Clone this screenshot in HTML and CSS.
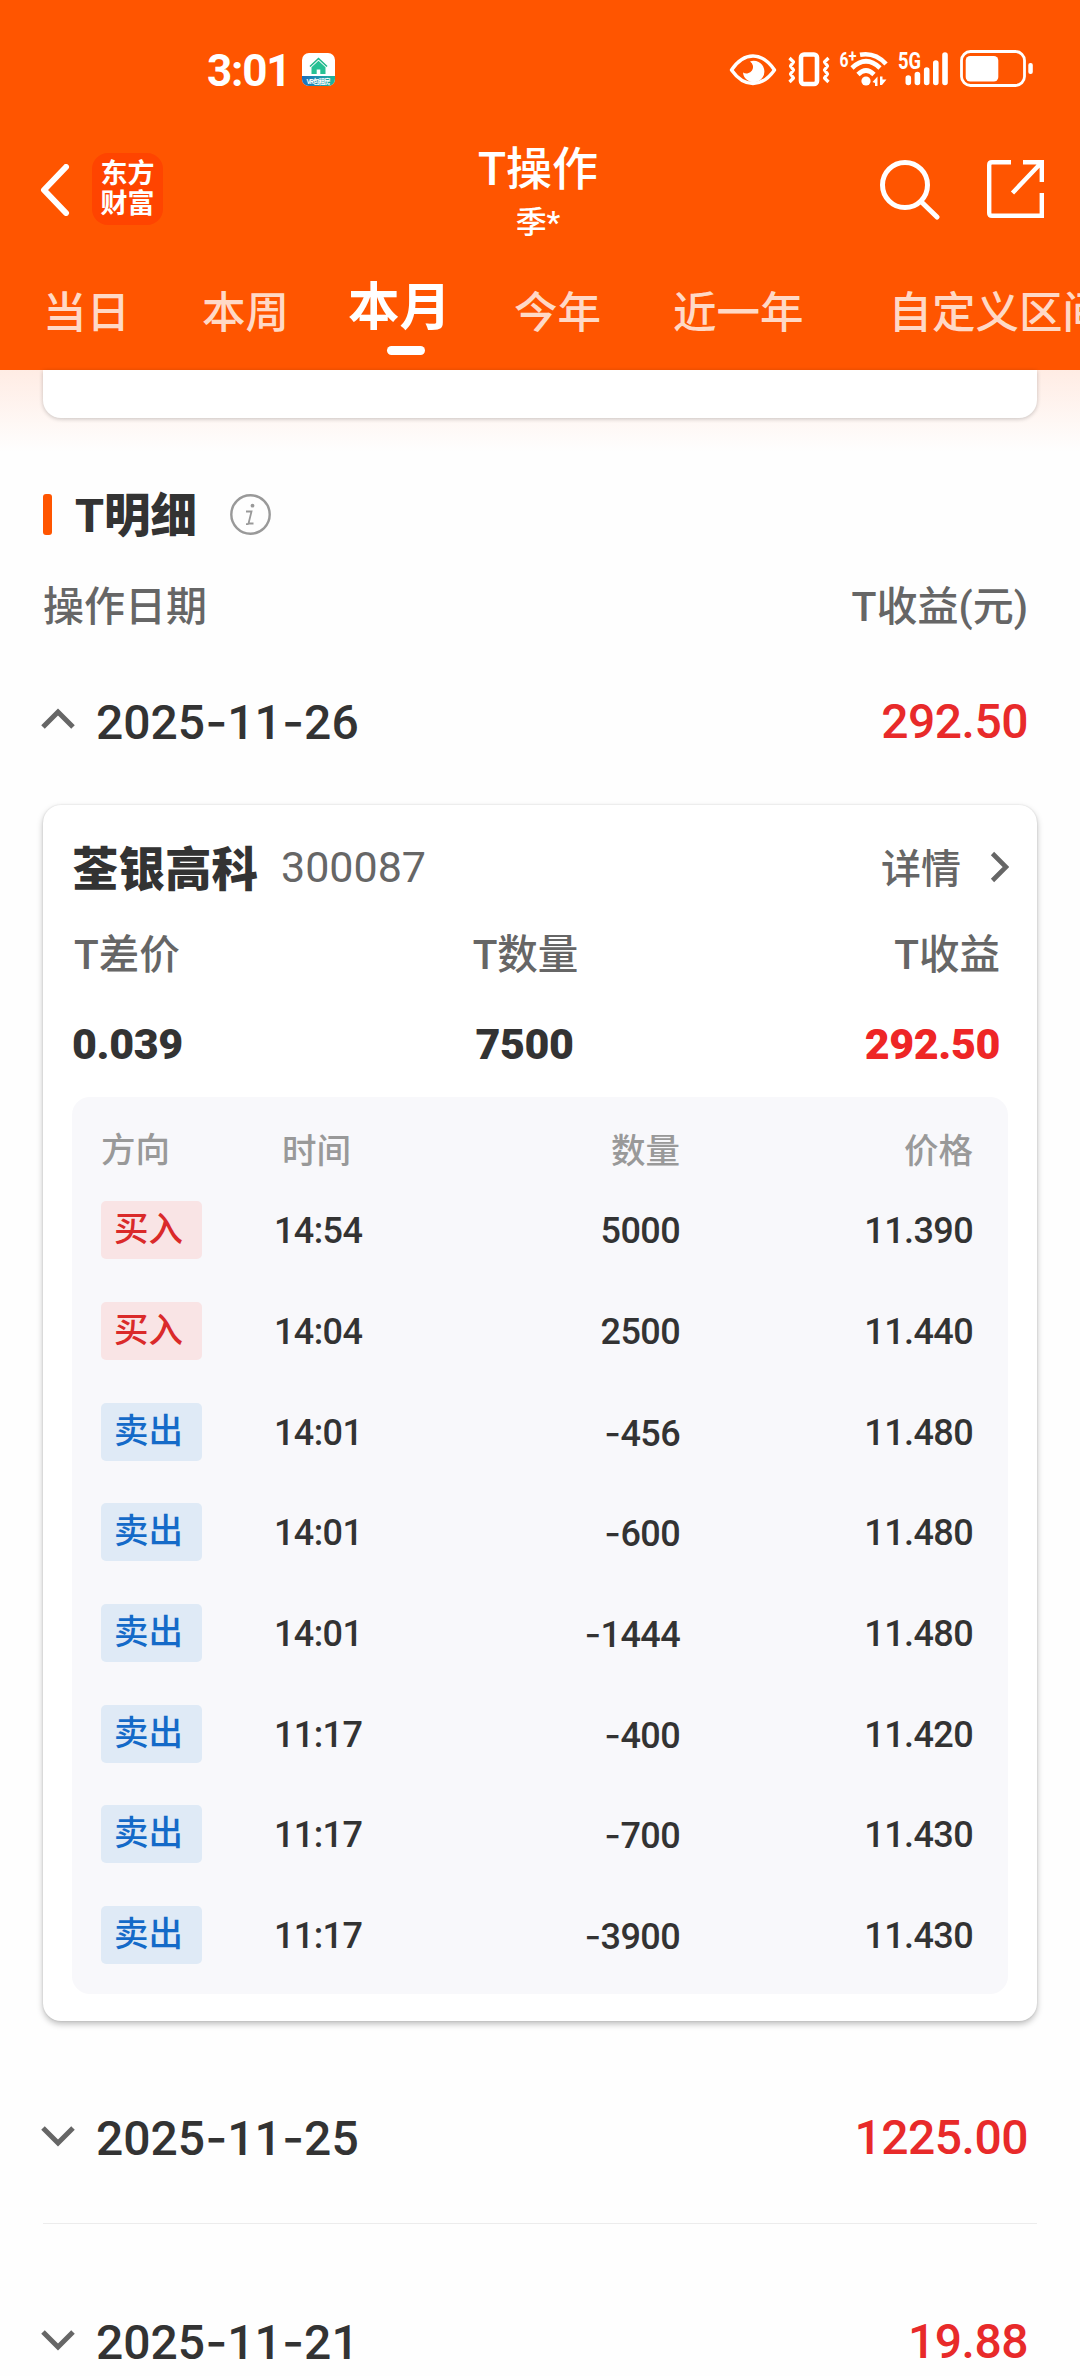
FILE: index.html
```html
<!DOCTYPE html>
<html lang="zh-CN">
<head>
<meta charset="utf-8">
<meta name="viewport" content="width=device-width, initial-scale=1">
<title>T操作</title>
<link rel="stylesheet" href="styles.css">
</head>
<body>
<div class="page">
  <header class="header">
    <div class="status">
      <div class="status-left">
        <span class="clock">3:01</span>
        <svg class="app-badge" viewBox="0 0 33 33">
          <defs>
            <clipPath id="badge"><rect width="33" height="33" rx="7"/></clipPath>
            <linearGradient id="strip"><stop offset="0" stop-color="#1d6fc0"/><stop offset="1" stop-color="#1fb79a"/></linearGradient>
          </defs>
          <g clip-path="url(#badge)">
            <rect width="33" height="33" fill="#fff"/>
            <rect y="23" width="33" height="10" fill="url(#strip)"/>
          </g>
          <path d="M8 13.5 16.5 5.5 25 13.5" fill="none" stroke="#22b88c" stroke-width="1.6"/>
          <path d="M9.5 14.2 16.5 7.8 23.5 14.2V21H18.300V16.500H14.700V21H9.500Z" fill="#27c194"/>
          <text x="16.500" y="31" text-anchor="middle" font-size="6.500" font-weight="700" fill="#fff" textLength="24">VR包租房</text>
        </svg>
      </div>
      <svg class="status-icons" viewBox="726 48 310 42" fill="none" stroke="#fff">
        <path d="M731.500 70Q741 56 753 56T774.500 70Q765 83.500 753 83.500T731.500 70Z" stroke-width="3.400" stroke-linejoin="round"/>
        <path d="M750 61.500A10.700 10.700 0 1 1 743 72.500 6.500 6.500 0 1 0 750 61.500Z" fill="#fff" stroke="none"/>
        <rect x="801" y="54.500" width="16" height="29.500" rx="3" stroke-width="4.600"/>
        <path d="M789.500 58l4 4-3 4 3 4-3 4 3 4-4 4M828.500 58l-4 4 3 4-3 4 3 4-3 4 4 4" stroke-width="3.200" stroke-linejoin="round"/>
        <g stroke-width="4.600">
          <path d="M860 54.800Q875 52 886 64"/>
          <path d="M852 68Q866 54.500 880 68"/>
          <path d="M858 74.500Q866 66.500 874 74.500"/>
        </g>
        <circle cx="866" cy="81" r="4.600" fill="#fff" stroke="none"/>
        <path d="M872.500 82l5-5.500v9.500h-2.500v-3ZM880 76.500h2.500v3h4l-4.500 5.500h-2Z" fill="#fff" stroke="none"/>
        <g fill="#fff" stroke="none" class="net">
          <text x="839.500" y="66.500" font-size="21" textLength="9" lengthAdjust="spacingAndGlyphs">6</text>
          <text x="848.500" y="62" font-size="16" textLength="8" lengthAdjust="spacingAndGlyphs">+</text>
          <text x="898" y="68.500" font-size="23" textLength="23" lengthAdjust="spacingAndGlyphs">5G</text>
        </g>
        <path d="M908.300 78v4.500M917.400 74.500v8M926.700 70v12.500M935.800 63v19.500M945 55v27.500" stroke-width="5.600" stroke-linecap="round"/>
        <rect x="961.500" y="51.500" width="63" height="34" rx="9" stroke-width="2.800"/>
        <rect x="965.700" y="56" width="32.600" height="25.500" rx="4.500" fill="#fff" stroke="none"/>
        <rect x="1028.300" y="63" width="4.500" height="11" rx="2" fill="#fff" stroke="none"/>
      </svg>
    </div>

    <div class="navbar">
      <div class="nav-left">
        <svg class="back" viewBox="0 0 30 52"><path d="M26 3 4 26 26 49" fill="none" stroke="#fff" stroke-width="6" stroke-linecap="round" stroke-linejoin="round"/></svg>
        <div class="brand"><span>东方</span><span>财富</span></div>
      </div>
      <div class="nav-title">
        <h1>T操作</h1>
        <p>季*</p>
      </div>
      <div class="nav-right">
        <svg class="search" viewBox="0 0 60 60" fill="none" stroke="#fff" stroke-width="5" stroke-linecap="round"><circle cx="25" cy="25" r="22.500"/><path d="M41.500 42 57 57"/></svg>
        <svg class="share" viewBox="0 0 57 58" fill="none" stroke="#fff" stroke-width="4.400"><path d="M24 2.200H5Q2.200 2.200 2.200 5V53Q2.200 55.800 5 55.800H54.800V33M36 2.200H54.800V22M54 3 25.500 33" /></svg>
      </div>
    </div>

    <nav class="tabs">
      <span class="tab">当日</span>
      <span class="tab">本周</span>
      <span class="tab active">本月</span>
      <span class="tab">今年</span>
      <span class="tab">近一年</span>
      <span class="tab">自定义区间</span>
    </nav>
  </header>

  <main class="content">
    <div class="summary-tail"></div>

    <div class="section-head">
      <i class="accent"></i>
      <h2>T明细</h2>
      <svg class="info" viewBox="0 0 41 41"><circle cx="20.500" cy="20.500" r="19.200" fill="none" stroke="#999" stroke-width="2.400"/><circle cx="22.500" cy="11.700" r="1.900" fill="#999"/><path d="M16 17.500H21.500L18.500 29.500H23.500M16 30.200H18.500" fill="none" stroke="#999" stroke-width="1.800"/></svg>
    </div>

    <div class="columns"><span>操作日期</span><span>T收益(元)</span></div>

    <div class="day">
      <svg class="caret" viewBox="0 0 34 21"><path d="M2 19 17 4 32 19" fill="none" stroke="#666" stroke-width="5"/></svg>
      <span class="date">2025<b>-</b>11<b>-</b>26</span>
      <span class="amount">292.50</span>
    </div>

    <section class="card">
      <div class="card-head">
        <h3>荃银高科</h3><span class="code">300087</span>
        <span class="detail">详情</span>
        <svg class="more" viewBox="0 0 19 32"><path d="M2.500 2.500 16 16 2.500 29.500" fill="none" stroke="#666" stroke-width="4.600"/></svg>
      </div>
      <div class="stats labels"><span>T差价</span><span>T数量</span><span>T收益</span></div>
      <div class="stats values"><span>0.039</span><span>7500</span><span class="up">292.50</span></div>
      <div class="trades">
        <div class="row head"><span>方向</span><span>时间</span><span>数量</span><span>价格</span></div>
        <div class="row"><span class="tag buy">买入</span><span>14:54</span><span>5000</span><span>11.390</span></div>
        <div class="row"><span class="tag buy">买入</span><span>14:04</span><span>2500</span><span>11.440</span></div>
        <div class="row"><span class="tag sell">卖出</span><span>14:01</span><span><b>-</b>456</span><span>11.480</span></div>
        <div class="row"><span class="tag sell">卖出</span><span>14:01</span><span><b>-</b>600</span><span>11.480</span></div>
        <div class="row"><span class="tag sell">卖出</span><span>14:01</span><span><b>-</b>1444</span><span>11.480</span></div>
        <div class="row"><span class="tag sell">卖出</span><span>11:17</span><span><b>-</b>400</span><span>11.420</span></div>
        <div class="row"><span class="tag sell">卖出</span><span>11:17</span><span><b>-</b>700</span><span>11.430</span></div>
        <div class="row"><span class="tag sell">卖出</span><span>11:17</span><span><b>-</b>3900</span><span>11.430</span></div>
      </div>
    </section>

    <div class="day closed">
      <svg class="caret" viewBox="0 0 34 21"><path d="M2 2 17 17 32 2" fill="none" stroke="#666" stroke-width="5"/></svg>
      <span class="date">2025<b>-</b>11<b>-</b>25</span>
      <span class="amount">1225.00</span>
    </div>
    <div class="day closed">
      <svg class="caret" viewBox="0 0 34 21"><path d="M2 2 17 17 32 2" fill="none" stroke="#666" stroke-width="5"/></svg>
      <span class="date">2025<b>-</b>11<b>-</b>21</span>
      <span class="amount">19.88</span>
    </div>
  </main>
</div>
</body>
</html>
```
FILE: styles.css
```css
* { box-sizing: border-box; }

body {
  margin: 0;
  font-family: Roboto, "Noto Sans CJK SC", sans-serif;
  color: #333;
  background: #fefefe;
}

h1, h2, h3, p { margin: 0; }
svg { display: block; flex: none; }

.page {
  width: 1080px;
  height: 2376px;
  overflow: hidden;
}

/* header */
.header {
  height: 370px;
  background: #ff5500;
  color: #fff;
  overflow: hidden;
}

.status {
  display: flex;
  justify-content: space-between;
  height: 90px;
  padding: 48px 44px 0 207px;
}
.status-left { display: flex; gap: 14px; }
.clock {
  width: 81px;
  font-size: 44px;
  font-weight: 700;
  line-height: 46px;
  letter-spacing: -1.2px;
  white-space: nowrap;
}
.app-badge { width: 33px; height: 33px; margin-top: 5px; }
.status-icons { width: 310px; height: 42px; }
.net { font-weight: 700; }

.navbar {
  display: grid;
  grid-template-columns: 1fr auto 1fr;
  height: 180px;
  padding: 50px 36px 0 40px;
}
.nav-left { display: flex; gap: 22px; padding-top: 13px; }
.back { width: 30px; height: 52px; margin-top: 11px; }
.brand {
  display: flex;
  flex-direction: column;
  align-items: center;
  justify-content: center;
  width: 71px;
  height: 72px;
  border-radius: 16px;
  background: #ff4400;
  font-size: 27px;
  font-weight: 700;
  line-height: 30px;
}
.nav-title { text-align: center; padding-right: 8px; }
.nav-title h1 { font-size: 46px; font-weight: 500; line-height: 58px; }
.nav-title p { font-size: 31px; font-weight: 500; line-height: 50px; }
.nav-right { display: flex; justify-content: flex-end; gap: 47px; padding-top: 20px; }
.search { width: 60px; height: 60px; }
.share { width: 57px; height: 58px; }

.tabs {
  display: flex;
  height: 100px;
  padding-left: 43px;
  white-space: nowrap;
}
.tab {
  flex: none;
  margin-right: 72px;
  font-size: 43.500px;
  font-weight: 500;
  line-height: 88px;
  color: #ffd9c6;
}
.tab:nth-child(2) { margin-right: 59px; }
.tab:nth-child(5) { margin-right: 85px; }
.active {
  display: flex;
  flex-direction: column;
  align-items: center;
  margin-right: 63px;
  font-size: 51.500px;
  font-weight: 700;
  line-height: 76px;
  color: #fff;
}
.active::after {
  content: "";
  width: 38px;
  height: 9px;
  margin: 0 0 0 13px;
  border-radius: 5px;
  background: #fff;
}

/* content */
.content {
  padding: 0 43px;
  background: linear-gradient(#ffece4, #fefefe 82px);
}
.summary-tail {
  height: 48px;
  border-radius: 0 0 18px 18px;
  background: #fff;
  box-shadow: 0 1px 4px rgba(0, 0, 0, .22);
}

.section-head {
  display: flex;
  align-items: center;
  height: 72px;
  margin-top: 60px;
}
.accent { width: 9px; height: 41px; border-radius: 3px; background: #ff5500; }
.section-head h2 { margin-left: 23px; padding-top: 4px; font-size: 46.500px; font-weight: 800; line-height: 60px; }
.info { width: 41px; height: 41px; margin-left: 33px; }

.columns {
  display: flex;
  justify-content: space-between;
  align-items: center;
  height: 110px;
  padding: 0 9px 4px 0;
  font-size: 41px;
  font-weight: 500;
  color: #666;
}

.day {
  display: flex;
  align-items: center;
  height: 122px;
  padding-right: 9px;
  font-size: 48px;
  font-weight: 500;
}
.caret { width: 34px; height: 21px; margin: 0 21px 6px -2px; }
.closed .caret { margin-bottom: 2px; }
.amount { margin-left: auto; letter-spacing: -.5px; color: #e82a2a; }

/* wide minus glyph between and before figures */
.date b, .row b { font-family: Inter, sans-serif; font-weight: 500; }

.day.closed {
  height: 171px;
  margin-top: 32px;
}
.card + .day.closed {
  height: 172px;
  margin-top: 31px;
  border-bottom: 1px solid #ececec;
}

.card {
  height: 1216px;
  margin-top: 23px;
  padding: 0 29px;
  border-radius: 18px;
  background: #fff;
  box-shadow: 0 3px 6px rgba(0, 0, 0, .26), 0 0 2px rgba(0, 0, 0, .12);
}
.card-head { display: flex; align-items: center; height: 124px; }
.card-head h3 { padding-bottom: 4px; font-size: 46.500px; font-weight: 900; }
.code { margin-left: 23px; font-size: 43px; color: #666; }
.detail { margin-left: auto; padding-bottom: 3px; font-size: 40px; font-weight: 500; color: #666; }
.more { width: 19px; height: 32px; margin: 0 -1px 0 29px; }

.stats {
  display: grid;
  grid-template-columns: 1fr 1fr 1fr;
  align-items: center;
  padding-right: 8px;
}
.stats span:nth-child(2) { text-align: center; padding-right: 23px; }
.stats span:nth-child(3) { text-align: right; }
.labels { height: 52px; padding-left: 2px; font-size: 40.500px; font-weight: 500; line-height: 44px; color: #666; }
.values { height: 107px; margin-top: 9px; font-size: 43px; font-weight: 900; letter-spacing: -.4px; }
.values .up { color: #ee2626; }

.trades {
  height: 897px;
  padding: 20px 35px 0 29px;
  border-radius: 18px;
  background: #f8f8fb;
}
.row {
  display: grid;
  grid-template-columns: 173px 1fr 1fr 293px;
  align-items: center;
  height: 100.7px;
  font-size: 36px;
  font-weight: 500;
  letter-spacing: -.6px;
}
.row span:nth-child(n+2) { padding-top: 2px; }
.row span:nth-child(n+3) { text-align: right; }
.row.head { height: 63px; padding-bottom: 4px; font-size: 34.500px; letter-spacing: 0; color: #999; }
.row.head span:nth-child(2) { padding-left: 8px; }
.tag {
  width: 101px;
  height: 58px;
  padding-left: 13px;
  border-radius: 5px;
  font-size: 34.500px;
  line-height: 56px;
  letter-spacing: 0;
}
.buy { background: #f9e4e5; color: #da2a2a; }
.sell { background: #dfeaf6; color: #146ac8; }
```
